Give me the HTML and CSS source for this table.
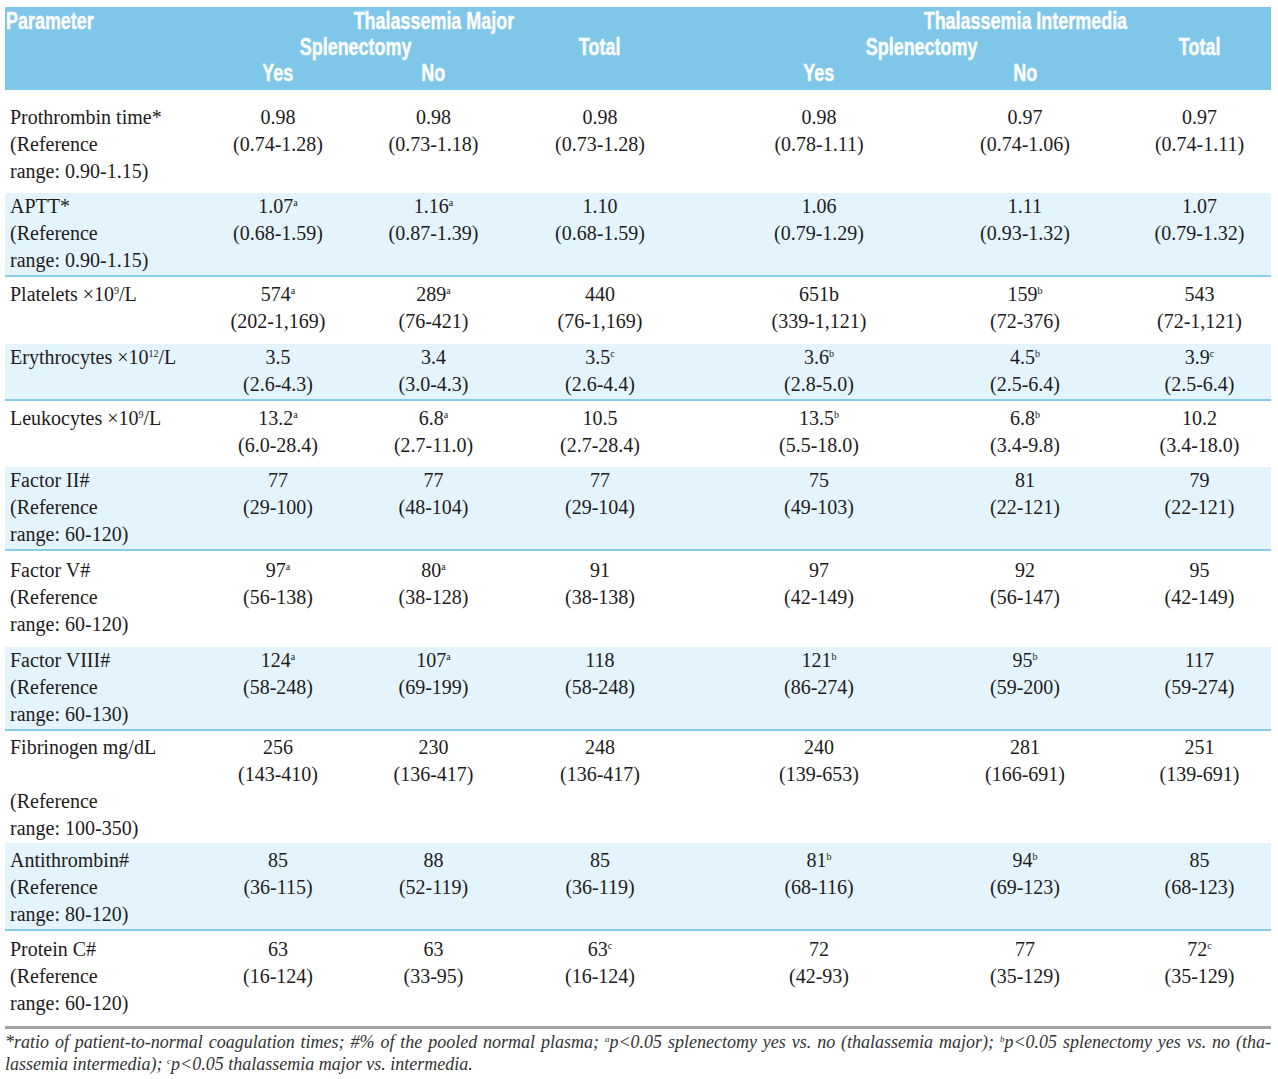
FILE: index.html
```html
<!DOCTYPE html>
<html lang="en">
<head>
<meta charset="utf-8">
<title>Coagulation parameters in thalassemia</title>
<link rel="stylesheet" href="styles.css">
</head>
<body>
<div class="page">
<table class="data">
  <colgroup>
    <col class="c-param">
    <col class="c-tm-yes">
    <col class="c-tm-no">
    <col class="c-tm-total">
    <col class="c-gap">
    <col class="c-ti-yes">
    <col class="c-ti-no">
    <col class="c-ti-total">
  </colgroup>
  <thead>
    <tr class="h1">
      <th class="param"><span class="hd">Parameter</span></th>
      <th></th>
      <th><div class="over"><span class="hd">Thalassemia Major</span></div></th>
      <th></th>
      <th></th>
      <th></th>
      <th><div class="over"><span class="hd">Thalassemia Intermedia</span></div></th>
      <th></th>
    </tr>
    <tr class="h2">
      <th></th>
      <th colspan="2"><span class="hd">Splenectomy</span></th>
      <th><span class="hd">Total</span></th>
      <th></th>
      <th colspan="2"><span class="hd">Splenectomy</span></th>
      <th><span class="hd">Total</span></th>
    </tr>
    <tr class="h3">
      <th></th>
      <th><span class="hd">Yes</span></th>
      <th><span class="hd">No</span></th>
      <th></th>
      <th></th>
      <th><span class="hd">Yes</span></th>
      <th><span class="hd">No</span></th>
      <th></th>
    </tr>
  </thead>
  <tbody>
    <tr class="r-pt">
      <td class="param">Prothrombin time*<br>(Reference<br>range: 0.90-1.15)</td>
      <td>0.98<br>(0.74-1.28)</td>
      <td>0.98<br>(0.73-1.18)</td>
      <td>0.98<br>(0.73-1.28)</td>
      <td></td>
      <td>0.98<br>(0.78-1.11)</td>
      <td>0.97<br>(0.74-1.06)</td>
      <td>0.97<br>(0.74-1.11)</td>
    </tr>
    <tr class="alt r-aptt">
      <td class="param">APTT*<br>(Reference<br>range: 0.90-1.15)</td>
      <td>1.07<sup>a</sup><br>(0.68-1.59)</td>
      <td>1.16<sup>a</sup><br>(0.87-1.39)</td>
      <td>1.10<br>(0.68-1.59)</td>
      <td></td>
      <td>1.06<br>(0.79-1.29)</td>
      <td>1.11<br>(0.93-1.32)</td>
      <td>1.07<br>(0.79-1.32)</td>
    </tr>
    <tr class="r-plt">
      <td class="param">Platelets ×10<sup>9</sup>/L</td>
      <td>574<sup>a</sup><br>(202-1,169)</td>
      <td>289<sup>a</sup><br>(76-421)</td>
      <td>440<br>(76-1,169)</td>
      <td></td>
      <td>651b<br>(339-1,121)</td>
      <td>159<sup>b</sup><br>(72-376)</td>
      <td>543<br>(72-1,121)</td>
    </tr>
    <tr class="alt r-ery">
      <td class="param">Erythrocytes ×10<sup>12</sup>/L</td>
      <td>3.5<br>(2.6-4.3)</td>
      <td>3.4<br>(3.0-4.3)</td>
      <td>3.5<sup>c</sup><br>(2.6-4.4)</td>
      <td></td>
      <td>3.6<sup>b</sup><br>(2.8-5.0)</td>
      <td>4.5<sup>b</sup><br>(2.5-6.4)</td>
      <td>3.9<sup>c</sup><br>(2.5-6.4)</td>
    </tr>
    <tr class="r-leu">
      <td class="param">Leukocytes ×10<sup>9</sup>/L</td>
      <td>13.2<sup>a</sup><br>(6.0-28.4)</td>
      <td>6.8<sup>a</sup><br>(2.7-11.0)</td>
      <td>10.5<br>(2.7-28.4)</td>
      <td></td>
      <td>13.5<sup>b</sup><br>(5.5-18.0)</td>
      <td>6.8<sup>b</sup><br>(3.4-9.8)</td>
      <td>10.2<br>(3.4-18.0)</td>
    </tr>
    <tr class="alt r-f2">
      <td class="param">Factor II#<br>(Reference<br>range: 60-120)</td>
      <td>77<br>(29-100)</td>
      <td>77<br>(48-104)</td>
      <td>77<br>(29-104)</td>
      <td></td>
      <td>75<br>(49-103)</td>
      <td>81<br>(22-121)</td>
      <td>79<br>(22-121)</td>
    </tr>
    <tr class="r-f5">
      <td class="param">Factor V#<br>(Reference<br>range: 60-120)</td>
      <td>97<sup>a</sup><br>(56-138)</td>
      <td>80<sup>a</sup><br>(38-128)</td>
      <td>91<br>(38-138)</td>
      <td></td>
      <td>97<br>(42-149)</td>
      <td>92<br>(56-147)</td>
      <td>95<br>(42-149)</td>
    </tr>
    <tr class="alt r-f8">
      <td class="param">Factor VIII#<br>(Reference<br>range: 60-130)</td>
      <td>124<sup>a</sup><br>(58-248)</td>
      <td>107<sup>a</sup><br>(69-199)</td>
      <td>118<br>(58-248)</td>
      <td></td>
      <td>121<sup>b</sup><br>(86-274)</td>
      <td>95<sup>b</sup><br>(59-200)</td>
      <td>117<br>(59-274)</td>
    </tr>
    <tr class="r-fib">
      <td class="param">Fibrinogen mg/dL<br>&nbsp;<br>(Reference<br>range: 100-350)</td>
      <td>256<br>(143-410)</td>
      <td>230<br>(136-417)</td>
      <td>248<br>(136-417)</td>
      <td></td>
      <td>240<br>(139-653)</td>
      <td>281<br>(166-691)</td>
      <td>251<br>(139-691)</td>
    </tr>
    <tr class="alt r-at">
      <td class="param">Antithrombin#<br>(Reference<br>range: 80-120)</td>
      <td>85<br>(36-115)</td>
      <td>88<br>(52-119)</td>
      <td>85<br>(36-119)</td>
      <td></td>
      <td>81<sup>b</sup><br>(68-116)</td>
      <td>94<sup>b</sup><br>(69-123)</td>
      <td>85<br>(68-123)</td>
    </tr>
    <tr class="r-pc">
      <td class="param">Protein C#<br>(Reference<br>range: 60-120)</td>
      <td>63<br>(16-124)</td>
      <td>63<br>(33-95)</td>
      <td>63<sup>c</sup><br>(16-124)</td>
      <td></td>
      <td>72<br>(42-93)</td>
      <td>77<br>(35-129)</td>
      <td>72<sup>c</sup><br>(35-129)</td>
    </tr>
  </tbody>
</table>
<div class="notes">
  <p class="note-line first">*ratio of patient-to-normal coagulation times; #% of the pooled normal plasma; <sup>a</sup>p&lt;0.05 splenectomy yes <i class="vs">vs.</i> no (thalassemia major); <sup>b</sup>p&lt;0.05 splenectomy yes <i class="vs">vs.</i> no (tha-</p>
  <p class="note-line">lassemia intermedia); <sup>c</sup>p&lt;0.05 thalassemia major <i class="vs">vs.</i> intermedia.</p>
</div>
</div>
</body>
</html>
```

FILE: styles.css
```css
html, body {
  margin: 0;
  padding: 0;
  background: #ffffff;
}

body {
  font-family: "Liberation Serif", "Times New Roman", serif;
  color: #1e1b1c;
}

.page {
  width: 1266px;
  padding: 7px 7px 0 5px;
}

.data {
  width: 1266px;
  border-collapse: collapse;
  table-layout: fixed;
}

.c-param { width: 195px; }
.c-tm-yes { width: 156px; }
.c-tm-no { width: 155px; }
.c-tm-total { width: 178px; }
.c-gap { width: 27px; }
.c-ti-yes { width: 206px; }
.c-ti-no { width: 206px; }
.c-ti-total { width: 143px; }

/* header */
.data thead th {
  background: #7ec7e8;
  color: #ffffff;
  font-family: "Liberation Sans Narrow", "Liberation Sans", sans-serif;
  font-weight: bold;
  font-size: 23px;
  line-height: 26px;
  padding: 0;
  text-align: center;
  white-space: nowrap;
}

.hd {
  display: inline-block;
  transform: scaleX(0.78);
  transform-origin: center;
  -webkit-text-stroke: 0.4px #ffffff;
}

.data thead .h1 th { padding-top: 1px; }
.data thead .h3 th { padding-bottom: 4px; }

.data thead th.param {
  text-align: left;
  padding-left: 1px;
}

.data thead th.param .hd {
  transform-origin: left center;
}

.over {
  margin: 0 -60px;
  text-align: center;
  white-space: nowrap;
}

/* body */
.data tbody td {
  font-size: 20px;
  line-height: 27px;
  text-align: center;
  vertical-align: top;
  padding: 4px 0 8px;
  white-space: nowrap;
}

.data tbody td.param {
  text-align: left;
  padding-left: 5px;
}

.data tbody tr.alt td {
  background: #e3f4fc;
}

.data tbody tr.alt {
  border-bottom: 2px solid #86cdec;
}

.data tbody tr.alt td { padding-top: 0; padding-bottom: 1px; }

.data tbody tr.r-pt td { padding-top: 14px; padding-bottom: 8px; }
.data tbody tr.r-plt td { padding-top: 4px; padding-bottom: 9px; }
.data tbody tr.r-leu td { padding-top: 4px; padding-bottom: 8px; }
.data tbody tr.r-f5 td { padding-top: 6px; padding-bottom: 9px; }
.data tbody tr.r-fib td { padding-top: 3px; padding-bottom: 1px; }
.data tbody tr.r-at td { padding-top: 4px; padding-bottom: 1px; }
.data tbody tr.r-pc td { padding-top: 5px; padding-bottom: 3px; }

sup {
  font-size: 10px;
  line-height: 0;
  vertical-align: 7px;
}

/* notes */
.notes {
  margin-top: 6px;
  border-top: 3px solid #a3a3a3;
  padding-top: 2px;
  width: 1266px;
}

.note-line {
  margin: 0;
  font-style: italic;
  font-size: 18px;
  line-height: 22px;
  color: #333333;
}

.note-line.first {
  text-align: justify;
  text-align-last: justify;
}

.note-line sup {
  font-size: 9px;
  vertical-align: 6px;
}

.vs {
  font-style: italic;
}
```
